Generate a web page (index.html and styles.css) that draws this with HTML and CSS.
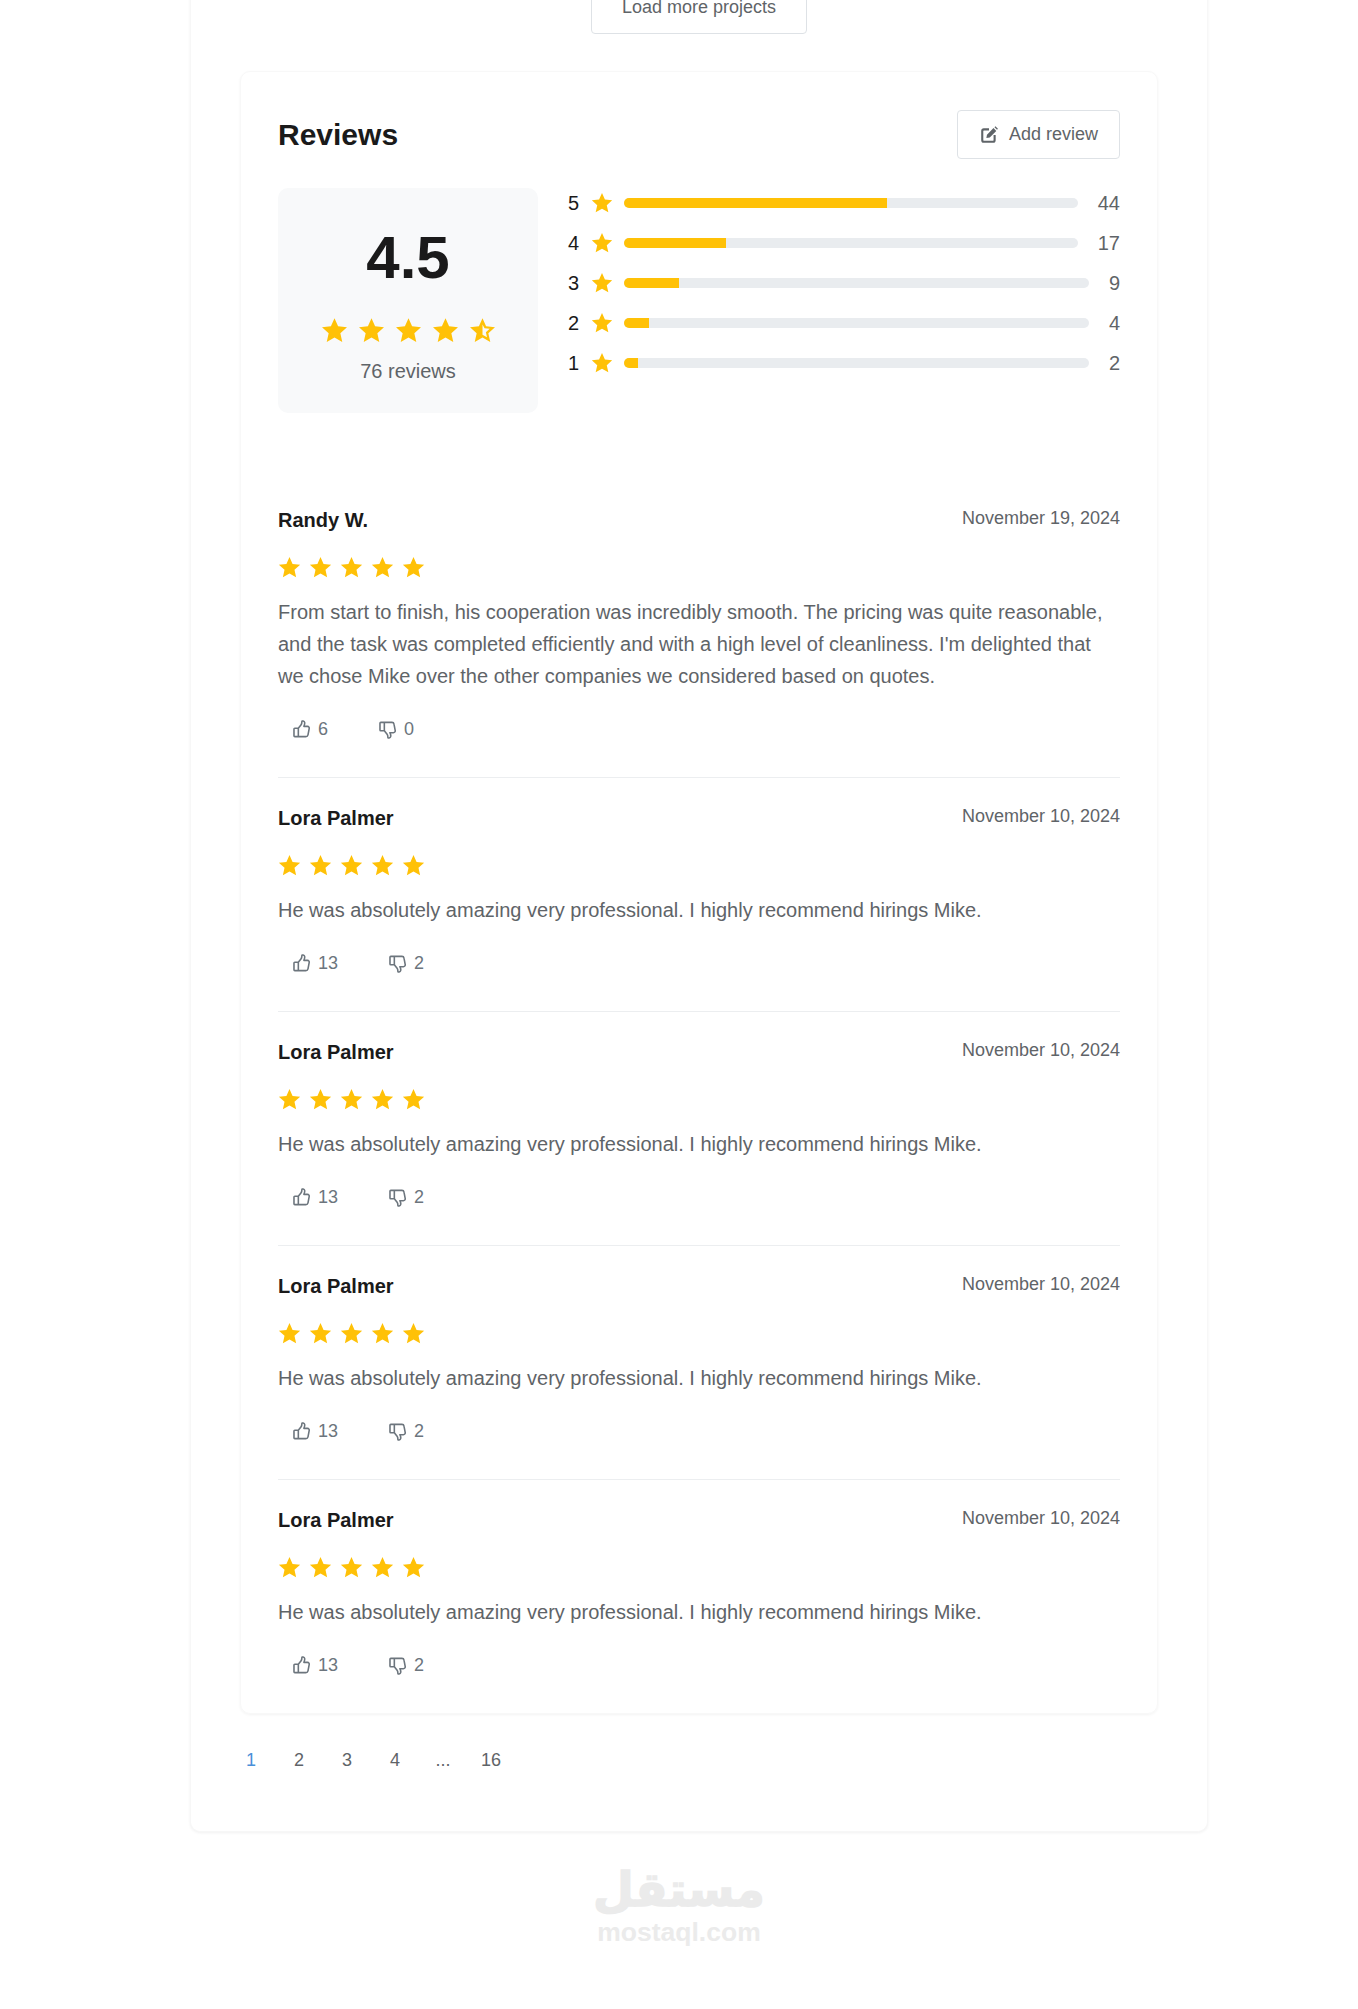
FILE: index.html
```html
<!DOCTYPE html>
<html>
    <head>
        <meta charset="utf-8">
        <title>Reviews</title>
        <link rel="stylesheet" href="styles.css">
    </head>
    <body>
        <svg class="icon-defs" xmlns="http://www.w3.org/2000/svg">
            <symbol id="star" viewBox="0 0 24 24">
                <path d="M12 1l3.2 7.3 7.9.8-5.9 5.3 1.7 7.8L12 18.2l-6.9 4 1.7-7.8L.9 9.1l7.9-.8z"/>
            </symbol>
            <symbol id="star-half" viewBox="0 0 24 24">
                <path d="M12 1l3.2 7.3 7.9.8-5.9 5.3 1.7 7.8L12 18.2l-6.9 4 1.7-7.8L.9 9.1l7.9-.8zm0 5.600v9.200l4 2.300-1-4.500 3.400-3.100-4.600-.5z" fill-rule="evenodd"/>
            </symbol>
            <symbol id="thumb-up" viewBox="0 0 24 24">
                <path d="M8 10.500l3.500-4.500c.9-1.200 1-2.500 1-4 0-1.300 3-1 3.500 1 .4 1.700-.3 3.700-1 5h4.500c1.700 0 2.600 1.500 2.200 3l-1.500 7.700c-.3 1.300-1.300 2.300-2.700 2.300H8M3.500 10.500H8V21H3.500c-.6 0-1-.4-1-1v-8.500c0-.6.4-1 1-1z" fill="none" stroke="currentColor" stroke-width="2" stroke-linejoin="round" stroke-linecap="round"/>
            </symbol>
            <symbol id="thumb-down" viewBox="0 0 24 24">
                <path d="M8 13.500l3.500 4.500c.9 1.200 1 2.500 1 4 0 1.300 3 1 3.500-1 .4-1.700-.3-3.700-1-5h4.500c1.700 0 2.600-1.500 2.200-3l-1.500-7.700C20 4 19 3 17.700 3H8M3.500 13.500H8V3H3.500c-.6 0-1 .4-1 1v8.500c0 .6.4 1 1 1z" fill="none" stroke="currentColor" stroke-width="2" stroke-linejoin="round" stroke-linecap="round"/>
            </symbol>
            <symbol id="edit" viewBox="0 0 24 24">
                <path d="M12 4.500H5C3.600 4.500 3 5.200 3 6.500V19c0 1.300.7 2 2 2h12.500c1.300 0 2-.7 2-2v-7" fill="none" stroke="currentColor" stroke-width="2.800"/>
                <path d="M8.500 16l.8-4.500L18 2.800l3.700 3.700-8.700 8.700zM19.300 1.500l1.200-1.200 3.400 3.400-1.200 1.200z"/>
            </symbol>
        </svg>

        <div class="panel">
            <div class="load-row">
                <a class="btn btn-load">Load more projects</a>
            </div>

            <div class="reviews-card">
                <div class="reviews-head">
                    <h2>Reviews</h2>
                    <a class="btn btn-add">
                        <svg class="icon-edit"><use href="#edit"/></svg>
                        Add review
                    </a>
                </div>

                <div class="summary">
                    <div class="score-box">
                        <div class="score">4.5</div>
                        <div class="score-stars">
                            <svg class="star"><use href="#star"/></svg>
                            <svg class="star"><use href="#star"/></svg>
                            <svg class="star"><use href="#star"/></svg>
                            <svg class="star"><use href="#star"/></svg>
                            <svg class="star"><use href="#star-half"/></svg>
                        </div>
                        <div class="score-count">76 reviews</div>
                    </div>
                    <div class="bars">
                        <div class="bar-row">
                            <span class="bar-num">5</span>
                            <svg class="star"><use href="#star"/></svg>
                            <div class="bar-track"><div class="bar-fill" style="width: 57.9%"></div></div>
                            <span class="bar-count">44</span>
                        </div>
                        <div class="bar-row">
                            <span class="bar-num">4</span>
                            <svg class="star"><use href="#star"/></svg>
                            <div class="bar-track"><div class="bar-fill" style="width: 22.4%"></div></div>
                            <span class="bar-count">17</span>
                        </div>
                        <div class="bar-row">
                            <span class="bar-num">3</span>
                            <svg class="star"><use href="#star"/></svg>
                            <div class="bar-track"><div class="bar-fill" style="width: 11.8%"></div></div>
                            <span class="bar-count">9</span>
                        </div>
                        <div class="bar-row">
                            <span class="bar-num">2</span>
                            <svg class="star"><use href="#star"/></svg>
                            <div class="bar-track"><div class="bar-fill" style="width: 5.3%"></div></div>
                            <span class="bar-count">4</span>
                        </div>
                        <div class="bar-row">
                            <span class="bar-num">1</span>
                            <svg class="star"><use href="#star"/></svg>
                            <div class="bar-track"><div class="bar-fill" style="width: 3%"></div></div>
                            <span class="bar-count">2</span>
                        </div>
                    </div>
                </div>

                <div class="review-list">
                    <div class="review">
                        <div class="review-top">
                            <div class="review-name">Randy W.</div>
                            <div class="review-date">November 19, 2024</div>
                        </div>
                        <div class="review-stars">
                            <svg class="star"><use href="#star"/></svg>
                            <svg class="star"><use href="#star"/></svg>
                            <svg class="star"><use href="#star"/></svg>
                            <svg class="star"><use href="#star"/></svg>
                            <svg class="star"><use href="#star"/></svg>
                        </div>
                        <p class="review-text">From start to finish, his cooperation was incredibly smooth. The pricing was quite reasonable, and the task was completed efficiently and with a high level of cleanliness. I'm delighted that we chose Mike over the other companies we considered based on quotes.</p>
                        <div class="review-actions">
                            <span class="vote"><svg class="thumb"><use href="#thumb-up"/></svg>6</span>
                            <span class="vote"><svg class="thumb"><use href="#thumb-down"/></svg>0</span>
                        </div>
                    </div>

                    <div class="review">
                        <div class="review-top">
                            <div class="review-name">Lora Palmer</div>
                            <div class="review-date">November 10, 2024</div>
                        </div>
                        <div class="review-stars">
                            <svg class="star"><use href="#star"/></svg>
                            <svg class="star"><use href="#star"/></svg>
                            <svg class="star"><use href="#star"/></svg>
                            <svg class="star"><use href="#star"/></svg>
                            <svg class="star"><use href="#star"/></svg>
                        </div>
                        <p class="review-text">He was absolutely amazing very professional. I highly recommend hirings Mike.</p>
                        <div class="review-actions">
                            <span class="vote"><svg class="thumb"><use href="#thumb-up"/></svg>13</span>
                            <span class="vote"><svg class="thumb"><use href="#thumb-down"/></svg>2</span>
                        </div>
                    </div>

                    <div class="review">
                        <div class="review-top">
                            <div class="review-name">Lora Palmer</div>
                            <div class="review-date">November 10, 2024</div>
                        </div>
                        <div class="review-stars">
                            <svg class="star"><use href="#star"/></svg>
                            <svg class="star"><use href="#star"/></svg>
                            <svg class="star"><use href="#star"/></svg>
                            <svg class="star"><use href="#star"/></svg>
                            <svg class="star"><use href="#star"/></svg>
                        </div>
                        <p class="review-text">He was absolutely amazing very professional. I highly recommend hirings Mike.</p>
                        <div class="review-actions">
                            <span class="vote"><svg class="thumb"><use href="#thumb-up"/></svg>13</span>
                            <span class="vote"><svg class="thumb"><use href="#thumb-down"/></svg>2</span>
                        </div>
                    </div>

                    <div class="review">
                        <div class="review-top">
                            <div class="review-name">Lora Palmer</div>
                            <div class="review-date">November 10, 2024</div>
                        </div>
                        <div class="review-stars">
                            <svg class="star"><use href="#star"/></svg>
                            <svg class="star"><use href="#star"/></svg>
                            <svg class="star"><use href="#star"/></svg>
                            <svg class="star"><use href="#star"/></svg>
                            <svg class="star"><use href="#star"/></svg>
                        </div>
                        <p class="review-text">He was absolutely amazing very professional. I highly recommend hirings Mike.</p>
                        <div class="review-actions">
                            <span class="vote"><svg class="thumb"><use href="#thumb-up"/></svg>13</span>
                            <span class="vote"><svg class="thumb"><use href="#thumb-down"/></svg>2</span>
                        </div>
                    </div>

                    <div class="review">
                        <div class="review-top">
                            <div class="review-name">Lora Palmer</div>
                            <div class="review-date">November 10, 2024</div>
                        </div>
                        <div class="review-stars">
                            <svg class="star"><use href="#star"/></svg>
                            <svg class="star"><use href="#star"/></svg>
                            <svg class="star"><use href="#star"/></svg>
                            <svg class="star"><use href="#star"/></svg>
                            <svg class="star"><use href="#star"/></svg>
                        </div>
                        <p class="review-text">He was absolutely amazing very professional. I highly recommend hirings Mike.</p>
                        <div class="review-actions">
                            <span class="vote"><svg class="thumb"><use href="#thumb-up"/></svg>13</span>
                            <span class="vote"><svg class="thumb"><use href="#thumb-down"/></svg>2</span>
                        </div>
                    </div>
                </div>
            </div>

            <div class="pager">
                <a class="page active">1</a>
                <a class="page">2</a>
                <a class="page">3</a>
                <a class="page">4</a>
                <a class="page">...</a>
                <a class="page">16</a>
            </div>
        </div>

        <div class="site-logo">
            <div class="logo-ar">مستقل</div>
            <div class="logo-en">mostaql.com</div>
        </div>
    </body>
</html>
```

FILE: styles.css
```css
body, html {
    margin: 0;
    padding: 0;
    background-color: white;
    color: #5f6468;
    font-family: 'Liberation Sans', Arial, sans-serif;
    font-size: 20px;
}

.icon-defs {
    display: none;
}

.panel {
    width: 1018px;
    margin: -20px 0 0 190px;
    box-sizing: border-box;
    padding: 0 49px 58px;
    background-color: white;
    border: 1px solid #f7f7f7;
    border-top: 0;
    border-radius: 0 0 10px 10px;
    box-shadow: 0 1px 3px rgba(0,0,0,0.06);
}

.load-row {
    display: flex;
    justify-content: center;
}

.btn {
    display: flex;
    align-items: center;
    box-sizing: border-box;
    background-color: white;
    border: 1px solid #dee2e6;
    border-radius: 4px;
    font-size: 18px;
}

.btn-load {
    width: 216px;
    height: 54px;
    justify-content: center;
}

.reviews-card {
    margin-top: 37px;
    box-sizing: border-box;
    padding: 38px 37px 0;
    border: 1px solid #f8f8f8;
    border-radius: 10px;
    box-shadow: 0 1px 3px rgba(0,0,0,0.05);
}

.reviews-head {
    display: flex;
    justify-content: space-between;
    align-items: center;
    height: 49px;
}

.reviews-head h2 {
    margin: 0;
    font-size: 30px;
    color: #1a1a1a;
}

.btn-add {
    width: 163px;
    height: 49px;
    padding-left: 22px;
}

.icon-edit {
    width: 18px;
    height: 18px;
    margin-right: 11px;
    color: #5f6468;
    fill: #5f6468;
}

.star {
    fill: #ffc107;
}

.summary {
    display: flex;
    margin-top: 29px;
}

.score-box {
    width: 260px;
    height: 225px;
    background-color: #f8f9fa;
    border-radius: 10px;
    text-align: center;
}

.score {
    margin-top: 35px;
    font-size: 60px;
    line-height: 70px;
    font-weight: bold;
    color: #1a1a1a;
}

.score-stars {
    display: flex;
    justify-content: center;
    gap: 10px;
    margin-top: 24px;
}

.score-stars .star {
    width: 27px;
    height: 27px;
}

.score-count {
    margin-top: 16px;
}

.bars {
    flex: 1;
    margin: -5px 0 0 30px;
}

.bar-row {
    display: flex;
    align-items: center;
    height: 40px;
}

.bar-num {
    width: 12px;
    color: #1a1a1a;
}

.bar-row .star {
    width: 22px;
    height: 22px;
    margin: 0 11px;
}

.bar-track {
    flex: 1;
    height: 10px;
    background-color: #e9ecef;
    border-radius: 5px;
    overflow: hidden;
}

.bar-fill {
    height: 100%;
    background-color: #ffc107;
}

.bar-count {
    margin-left: 20px;
}

.review-list {
    margin-top: 67px;
}

.review {
    padding: 27px 0 37px;
    border-bottom: 1px solid #eceef0;
}

.review:last-child {
    border-bottom: 0;
}

.review-top {
    display: flex;
    justify-content: space-between;
}

.review-name {
    font-weight: bold;
    line-height: 26px;
    color: #1a1a1a;
}

.review-date {
    font-size: 18px;
    line-height: 22px;
}

.review-stars {
    display: flex;
    gap: 8px;
    margin-top: 23px;
}

.review-stars .star {
    width: 23px;
    height: 23px;
}

.review-text {
    margin: 17px 0 0;
    line-height: 32px;
}

.review-actions {
    display: flex;
    margin-top: 27px;
    padding-left: 14px;
}

.vote {
    display: flex;
    align-items: center;
    gap: 7px;
    margin-right: 50px;
    font-size: 18px;
    color: #6c757d;
}

.thumb {
    width: 19px;
    height: 19px;
}

.pager {
    display: flex;
    margin: 33px 0 0 -13px;
    font-size: 18px;
}

.page {
    width: 48px;
    text-align: center;
    line-height: 26px;
}

.page.active {
    color: #4a90d9;
}

.site-logo {
    margin-top: 30px;
    text-align: center;
    color: #ebebeb;
    font-weight: bold;
}

.logo-ar {
    font-family: 'DejaVu Sans', sans-serif;
    font-size: 47px;
    line-height: 56px;
    -webkit-text-stroke: 1.5px #ebebeb;
}

.logo-en {
    font-size: 26.500px;
    line-height: 28px;
}
```
